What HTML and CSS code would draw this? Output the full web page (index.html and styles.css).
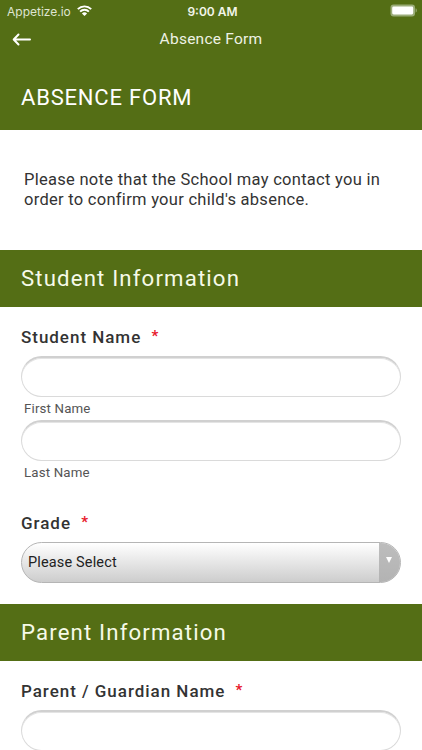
FILE: index.html
```html
<!DOCTYPE html>
<html lang="en">
<head>
<meta charset="UTF-8" />
<meta name="viewport" content="width=device-width, initial-scale=1" />
<title>Absence Form</title>
<link rel="stylesheet" href="styles.css">
</head>
<body>

  <header class="header">
    <div class="status-bar">
      <div class="carrier">
        <span>Appetize.io</span>
        <svg class="wifi" viewBox="0 0 15 11" aria-hidden="true">
          <path d="M0.8 4.2a9.4 9.4 0 0 1 13.4 0M3.1 6.6a6.2 6.2 0 0 1 8.8 0" fill="none" stroke="#fff" stroke-width="1.9"/>
          <path d="M4.9 8.5a3.7 3.7 0 0 1 5.2 0L7.5 11z" fill="#fff"/>
        </svg>
      </div>
      <span class="time">9:00 AM</span>
      <svg class="battery" viewBox="0 0 28 13" aria-hidden="true">
        <rect x="0.5" y="0.5" width="24.5" height="12" rx="3" fill="#9aac78"/>
        <path d="M25.6 4.3c1.6.6 1.6 3.8 0 4.4z" fill="#9aac78"/>
        <rect x="2.2" y="2.5" width="21" height="8" rx="1.4" fill="#fff"/>
      </svg>
    </div>

    <nav class="nav-bar">
      <a href="#" class="back" aria-label="Back">
        <svg viewBox="0 0 20 14" aria-hidden="true">
          <path d="M18 7.5H2M6.5 2.5L1.7 7.5l4.8 5" fill="none" stroke="#fff" stroke-width="2" stroke-linecap="round" stroke-linejoin="round"/>
        </svg>
      </a>
      <span class="nav-title">Absence Form</span>
    </nav>

    <h1 class="form-title">ABSENCE FORM</h1>
  </header>

  <main>
    <p class="intro">Please note that the School may contact you in<br>order to confirm your child's absence.</p>

    <h2 class="section-title">Student Information</h2>
    <div class="section">
      <div class="question">
        <label class="label" for="first">Student Name <span class="required">*</span></label>
        <input id="first" class="text-input" type="text">
        <label class="sub-label" for="first">First Name</label>
        <input id="last" class="text-input" type="text">
        <label class="sub-label" for="last">Last Name</label>
      </div>
      <div class="question">
        <span class="label">Grade <span class="required">*</span></span>
        <div class="select" role="button" tabindex="0">
          <span class="select-value">Please Select</span>
          <span class="select-arrow"></span>
        </div>
      </div>
    </div>

    <h2 class="section-title">Parent Information</h2>
    <div class="section">
      <div class="question">
        <label class="label" for="parent">Parent / Guardian Name <span class="required">*</span></label>
        <input id="parent" class="text-input" type="text">
      </div>
    </div>
  </main>

</body>
</html>
```

FILE: styles.css
```css
* {
  box-sizing: border-box;
}
body {
  margin: 0;
  height: 750px;
  overflow: hidden;
  background: #fff;
  color: #333;
  font-family: Roboto, "Liberation Sans", sans-serif;
}
.header {
  height: 129.5px;
  background: #546e15;
  color: #fff;
}
.status-bar {
  display: grid;
  grid-template-columns: 1fr auto 1fr;
  align-items: center;
  height: 22px;
  padding: 0 4px 0 7px;
  font-family: Inter, sans-serif;
  font-size: 12px;
}
.carrier {
  display: flex;
  align-items: center;
  gap: 6px;
  color: #dfe5d2;
}
.wifi {
  width: 15px;
  height: 11px;
  margin-bottom: 2px;
}
.time {
  font-weight: 600;
  color: #f2f5ea;
}
.battery {
  width: 28px;
  height: 13px;
  margin-bottom: 2px;
  justify-self: end;
}
.nav-bar {
  display: grid;
  grid-template-columns: 40px 1fr 40px;
  align-items: center;
  height: 34px;
}
.back {
  display: flex;
  padding-left: 12px;
}
.back svg {
  width: 20px;
  height: 14px;
}
.nav-title {
  text-align: center;
  font-size: 15.5px;
  letter-spacing: 0.25px;
  color: #eef2e4;
}
.form-title {
  margin: 0;
  padding: 29px 21px 0;
  font-size: 22px;
  line-height: 26px;
  font-weight: 400;
  letter-spacing: 0.8px;
}
.intro {
  height: 120px;
  margin: 0;
  padding: 40.5px 24px 0;
  font-size: 16.5px;
  line-height: 19.5px;
  letter-spacing: 0.28px;
  white-space: nowrap;
}
.section-title {
  height: 57px;
  margin: 0;
  padding: 0 21px;
  background: #546e15;
  color: #f6fae8;
  font-size: 22.2px;
  line-height: 57px;
  font-weight: 400;
  letter-spacing: 1.15px;
}
.section {
  display: flex;
  flex-direction: column;
  gap: 28.5px;
  padding: 20.5px 21px 21px;
}
.question {
  display: flex;
  flex-direction: column;
}
.label {
  margin-bottom: 8px;
  font-size: 17px;
  line-height: 21px;
  font-weight: 500;
  letter-spacing: 0.97px;
}
.required {
  margin-left: 5px;
  color: #e8192c;
  font-size: 15px;
  line-height: 1;
  font-weight: 700;
  vertical-align: 2px;
}
.text-input {
  width: 380px;
  height: 41px;
  padding: 0 16px;
  border: 1px solid #dadada;
  border-top: 2px solid #d0d0d0;
  border-radius: 21px;
  background: #fff;
  box-shadow: inset 0 1px 0 #e4e4e4;
  font: inherit;
  outline: none;
}
.sub-label {
  height: 23px;
  padding-left: 3px;
  color: #555;
  font-size: 13.3px;
  line-height: 23px;
  letter-spacing: 0.15px;
}
.select {
  display: flex;
  width: 380px;
  height: 41px;
  overflow: hidden;
  border: 1px solid #b5b5b5;
  border-radius: 21px;
  background: linear-gradient(#fff, #cdcdcd);
}
.select-value {
  flex: 1;
  padding-left: 6px;
  color: #222;
  font-size: 14.5px;
  line-height: 40px;
  letter-spacing: 0.15px;
}
.select-arrow {
  display: flex;
  justify-content: center;
  width: 21px;
  background: linear-gradient(#bdbdbd, #b3b3b3);
}
.select-arrow::before {
  content: "";
  width: 0;
  height: 0;
  margin: 14px 2px 0 0;
  border: 3.5px solid transparent;
  border-top: 6px solid #fff;
  border-bottom: 0;
}
```
